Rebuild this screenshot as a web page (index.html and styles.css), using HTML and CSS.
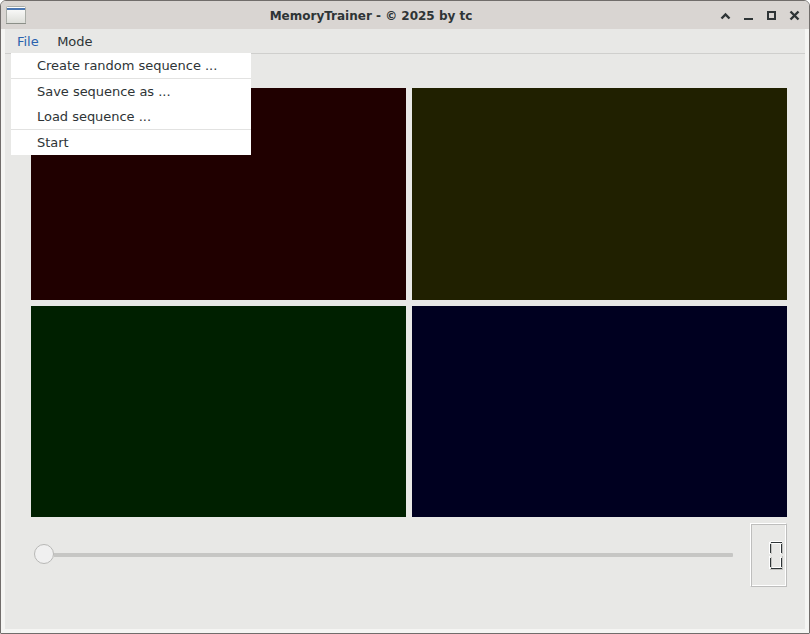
FILE: index.html
```html
<!DOCTYPE html>
<html lang="en">
<head>
<meta charset="utf-8">
<title>MemoryTrainer</title>
<link rel="stylesheet" href="styles.css">
</head>
<body>
<div class="window">
  <header class="titlebar">
    <svg class="app-icon" width="22" height="20" viewBox="0 0 22 20">
      <defs><linearGradient id="g" x1="0" y1="0" x2="0" y2="1"><stop offset="0" stop-color="#fff"/><stop offset="1" stop-color="#dcddd8"/></linearGradient></defs>
      <rect x="1.5" y="1.5" width="19" height="17" rx="1" fill="url(#g)" stroke="#a9aca6"/>
      <rect x="2" y="3" width="18" height="2" fill="#4a76b2"/>
      <path d="M1 18.5h20" stroke="#8b8f88"/>
    </svg>
    <h1 class="title">MemoryTrainer - © 2025 by tc</h1>
    <svg class="controls" width="80" height="12" viewBox="720 10 80 12" fill="none" stroke="#2e3436" stroke-width="2">
      <path d="M721.5 18.5l4-4 4 4" stroke-width="2.4"/>
      <path d="M744 19h9"/>
      <path d="M768 12h7v7h-7z"/>
      <path d="M790.5 11.5l8 8m0-8l-8 8" stroke-width="2.4"/>
    </svg>
  </header>
  <div class="client">
    <nav class="menubar">
      <div class="menu menu-open">File
        <div class="dropdown">
          <div class="item">Create random sequence ...</div>
          <div class="separator"></div>
          <div class="item">Save sequence as ...</div>
          <div class="item">Load sequence ...</div>
          <div class="separator"></div>
          <div class="item">Start</div>
        </div>
      </div>
      <div class="menu">Mode</div>
    </nav>
    <main class="content">
      <div class="board">
        <div class="red"></div><div class="yellow"></div>
        <div class="green"></div><div class="blue"></div>
      </div>
      <div class="status">
        <div class="slider"><div class="handle"></div><div class="track"></div></div>
        <div class="lcd">
          <svg width="16" height="32" viewBox="768 540 16 32" fill="none">
            <path d="M770 541.5h12M769.5 542v12M780.5 544v10M772 543.5h8M769.5 556v13M780.5 557v10M772 567.5h8" stroke="#fff"/>
            <path d="M771.5 544v10M782.5 543v11M771.5 557v11M782.5 556v13M770 569.5h13" stroke="#c2c2c0"/>
            <path d="M771 542.5h11M770.5 544v9M781.5 544v9M770.5 558v9M781.5 558v9M771 568.5h11" stroke="#2e3436"/>
          </svg>
        </div>
      </div>
    </main>
  </div>
</div>
</body>
</html>
```

FILE: styles.css
```css
* { box-sizing: border-box; }
body { margin: 0; background: #fff; font: 13px/25px "DejaVu Sans", sans-serif; letter-spacing: -0.03px; color: #2e3436; }
.window { width: 810px; height: 634px; border: 1px solid #716d6b; border-radius: 6px 6px 1px 1px; background: #f5f5f3; overflow: hidden; }
.titlebar { height: 28px; display: flex; align-items: center; background: #d9d5d2; padding: 0 9px 0 4px; }
.app-icon { flex: none; }
.title { margin: 0 5px 0 0; flex: 1; text-align: center; font-size: 12px; letter-spacing: 0; line-height: 28px; padding: 1px 0 0; }
.controls { flex: none; margin-top: 2px; }
.client { margin: 0 4px; height: 600px; background: #e8e8e6; }
.menubar { display: flex; height: 25px; padding-left: 6px; border-bottom: 1px solid #cfcfcd; }
.menu { position: relative; padding: 0 6px; margin-right: 6.5px; }
.menu-open { color: #2a62ad; }
.dropdown { position: absolute; z-index: 1; top: 24px; left: 0; width: 240px; height: 102px; background: #fff; color: #2e3436; }
.item { height: 25px; padding-left: 26px; white-space: nowrap; }
.separator { height: 1px; background: #e2e2e1; }
.content { padding: 34px 18px 0 26px; }
.board { display: grid; grid-template-columns: 375px 375px; grid-template-rows: 212px 211px; gap: 6px; }
.red { background: #200000; }
.yellow { background: #202000; }
.green { background: #002000; }
.blue { background: #000020; }
.status { display: flex; justify-content: space-between; padding-top: 6px; }
.slider { display: flex; width: 702px; height: 64px; align-items: center; padding-left: 3px; }
.handle { width: 20px; height: 20px; border: 1px solid #b8b8b6; border-radius: 50%; background: #f0f0f0; margin-top: -2px; }
.track { flex: 1; height: 4px; background: #c6c6c4; border-radius: 0 1px 1px 0; }
.lcd { display: flex; justify-content: flex-end; width: 37px; height: 64px; padding: 16px 2px 0 0; border: 1px solid; border-color: #fff #bebebd #bebebd #fff; box-shadow: inset 1px 1px #bebebd, inset -1px -1px #fff; }
```
